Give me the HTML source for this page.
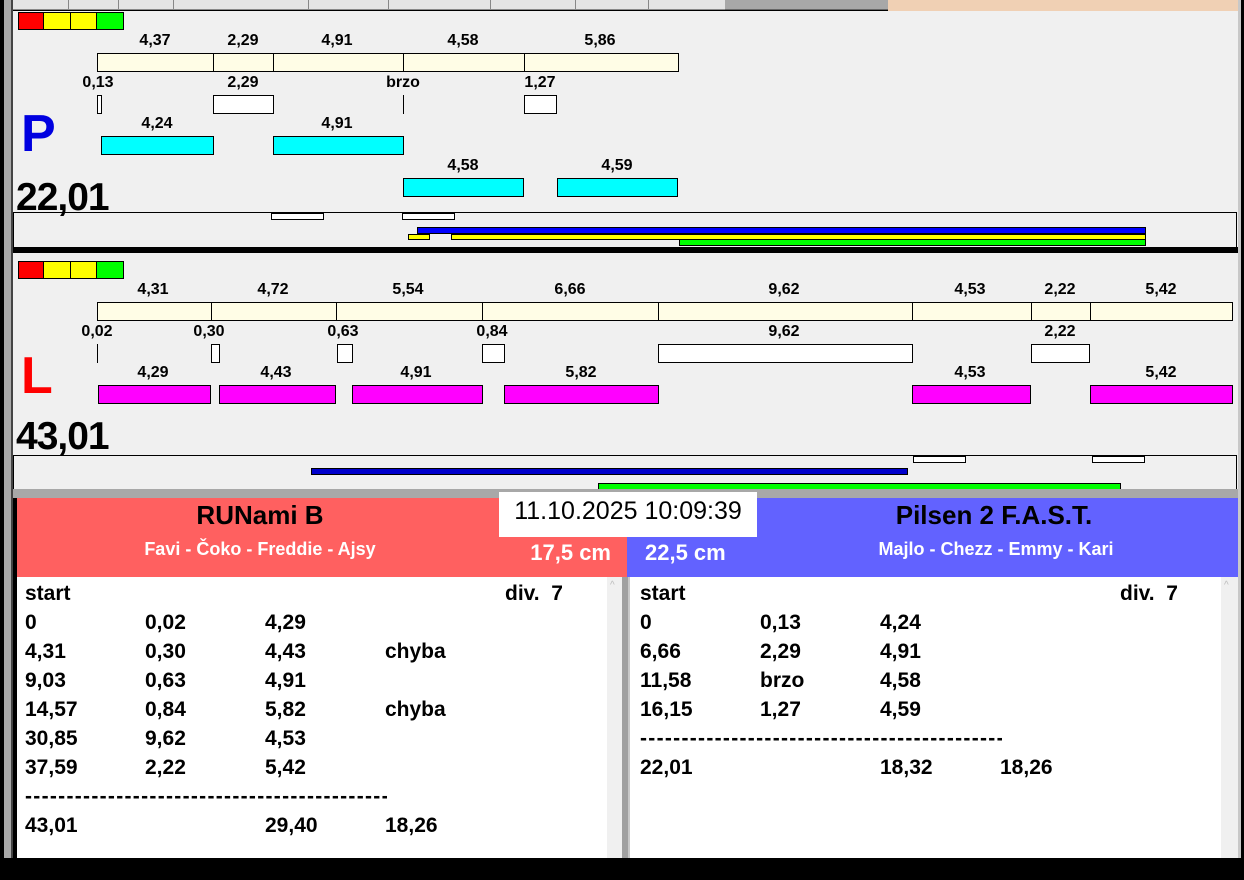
<!DOCTYPE html>
<html><head><meta charset="utf-8"><style>
*{margin:0;padding:0;box-sizing:border-box}
body{width:1244px;height:880px;background:#000;position:relative;overflow:hidden;font-family:"Liberation Sans",Arial,sans-serif;font-weight:bold}
div{position:absolute}
.p{background:#f0f0f0}
.y{background:#fffde6;border:1px solid #000}
.w{background:#fff;border:1px solid #000}
.c{background:#00ffff;border:1px solid #000}
.m{background:#ff00ff;border:1px solid #000}
.l{font-size:16px;color:#000;transform:translateX(-50%);white-space:nowrap;line-height:18px;top:0}
.t{font-size:21px;line-height:29px;white-space:nowrap;color:#000}
.d{font-size:21px;line-height:29px;white-space:nowrap;letter-spacing:1.3px;overflow:hidden;width:362px}
</style></head><body>
<!-- frame -->
<div style="left:4px;top:0;width:9px;height:858px;background:#a8a8a8;border-right:2px solid #444"></div>
<div style="left:1238px;top:0;width:3px;height:858px;background:#c8c8c8"></div>
<!-- top tab strip -->
<div style="left:13px;top:0;width:712px;height:10px;background:#e4e4e4;border-bottom:1px solid #888"></div>
<div style="left:68px;top:0;width:1px;height:9px;background:#888"></div>
<div style="left:118px;top:0;width:1px;height:9px;background:#888"></div>
<div style="left:173px;top:0;width:1px;height:9px;background:#888"></div>
<div style="left:308px;top:0;width:1px;height:9px;background:#888"></div>
<div style="left:388px;top:0;width:1px;height:9px;background:#888"></div>
<div style="left:490px;top:0;width:1px;height:9px;background:#888"></div>
<div style="left:575px;top:0;width:1px;height:9px;background:#888"></div>
<div style="left:648px;top:0;width:1px;height:9px;background:#888"></div>
<div style="left:725px;top:0;width:163px;height:10px;background:#a8a8a8;border-bottom:1px solid #666"></div>
<div style="left:888px;top:0;width:350px;height:12px;background:#f0d0b4"></div>

<!-- PANEL 1 -->
<div class="p" style="left:13px;top:11px;width:1225px;height:237px"></div>
<div style="left:18px;top:12px;width:26px;height:18px;background:#f00;border:1px solid #000"></div>
<div style="left:44px;top:12px;width:27px;height:18px;background:#ff0;border:1px solid #000;border-left:0"></div>
<div style="left:71px;top:12px;width:26px;height:18px;background:#ff0;border:1px solid #000;border-left:0"></div>
<div style="left:97px;top:12px;width:27px;height:18px;background:#0f0;border:1px solid #000;border-left:0"></div>

<div class="l" style="left:155px;top:32px">4,37</div>
<div class="l" style="left:243px;top:32px">2,29</div>
<div class="l" style="left:337px;top:32px">4,91</div>
<div class="l" style="left:463px;top:32px">4,58</div>
<div class="l" style="left:600px;top:32px">5,86</div>
<div class="y" style="left:97px;top:53px;width:117px;height:19px"></div>
<div class="y" style="left:213px;top:53px;width:61px;height:19px"></div>
<div class="y" style="left:273px;top:53px;width:131px;height:19px"></div>
<div class="y" style="left:403px;top:53px;width:122px;height:19px"></div>
<div class="y" style="left:524px;top:53px;width:155px;height:19px"></div>

<div class="l" style="left:98px;top:74px">0,13</div>
<div class="l" style="left:243px;top:74px">2,29</div>
<div class="l" style="left:403px;top:74px">brzo</div>
<div class="l" style="left:540px;top:74px">1,27</div>
<div class="w" style="left:97px;top:95px;width:5px;height:19px"></div>
<div class="w" style="left:213px;top:95px;width:61px;height:19px"></div>
<div style="left:403px;top:95px;width:1px;height:19px;background:#000"></div>
<div class="w" style="left:524px;top:95px;width:33px;height:19px"></div>

<div style="left:21px;top:104px;font-size:52px;color:#0000e0;line-height:60px">P</div>
<div class="l" style="left:157px;top:115px">4,24</div>
<div class="l" style="left:337px;top:115px">4,91</div>
<div class="c" style="left:101px;top:136px;width:113px;height:19px"></div>
<div class="c" style="left:273px;top:136px;width:131px;height:19px"></div>
<div class="l" style="left:463px;top:157px">4,58</div>
<div class="l" style="left:617px;top:157px">4,59</div>
<div class="c" style="left:403px;top:178px;width:121px;height:19px"></div>
<div class="c" style="left:557px;top:178px;width:121px;height:19px"></div>
<div style="left:16px;top:176px;font-size:39px;line-height:44px;letter-spacing:-1px">22,01</div>

<div style="left:13px;top:212px;width:1224px;height:36px;border:1px solid #000;border-bottom:0"></div>
<div class="w" style="left:271px;top:213px;width:53px;height:7px"></div>
<div class="w" style="left:402px;top:213px;width:53px;height:7px"></div>
<div style="left:417px;top:227px;width:729px;height:7px;background:#00f;border:1px solid #000"></div>
<div style="left:408px;top:234px;width:22px;height:6px;background:#ff0;border:1px solid #000"></div>
<div style="left:451px;top:234px;width:695px;height:6px;background:#ff0;border:1px solid #000"></div>
<div style="left:679px;top:240px;width:467px;height:6px;background:#0f0;border:1px solid #000;border-top:0"></div>
<div style="left:13px;top:247px;width:1225px;height:6px;background:#000"></div>

<!-- PANEL 2 -->
<div class="p" style="left:13px;top:253px;width:1225px;height:236px"></div>
<div style="left:18px;top:261px;width:26px;height:18px;background:#f00;border:1px solid #000"></div>
<div style="left:44px;top:261px;width:27px;height:18px;background:#ff0;border:1px solid #000;border-left:0"></div>
<div style="left:71px;top:261px;width:26px;height:18px;background:#ff0;border:1px solid #000;border-left:0"></div>
<div style="left:97px;top:261px;width:27px;height:18px;background:#0f0;border:1px solid #000;border-left:0"></div>

<div class="l" style="left:153px;top:281px">4,31</div>
<div class="l" style="left:273px;top:281px">4,72</div>
<div class="l" style="left:408px;top:281px">5,54</div>
<div class="l" style="left:570px;top:281px">6,66</div>
<div class="l" style="left:784px;top:281px">9,62</div>
<div class="l" style="left:970px;top:281px">4,53</div>
<div class="l" style="left:1060px;top:281px">2,22</div>
<div class="l" style="left:1161px;top:281px">5,42</div>
<div class="y" style="left:97px;top:302px;width:115px;height:19px"></div>
<div class="y" style="left:211px;top:302px;width:126px;height:19px"></div>
<div class="y" style="left:336px;top:302px;width:147px;height:19px"></div>
<div class="y" style="left:482px;top:302px;width:177px;height:19px"></div>
<div class="y" style="left:658px;top:302px;width:255px;height:19px"></div>
<div class="y" style="left:912px;top:302px;width:120px;height:19px"></div>
<div class="y" style="left:1031px;top:302px;width:60px;height:19px"></div>
<div class="y" style="left:1090px;top:302px;width:143px;height:19px"></div>

<div class="l" style="left:97px;top:323px">0,02</div>
<div class="l" style="left:209px;top:323px">0,30</div>
<div class="l" style="left:343px;top:323px">0,63</div>
<div class="l" style="left:492px;top:323px">0,84</div>
<div class="l" style="left:784px;top:323px">9,62</div>
<div class="l" style="left:1060px;top:323px">2,22</div>
<div style="left:97px;top:344px;width:1px;height:19px;background:#000"></div>
<div class="w" style="left:211px;top:344px;width:9px;height:19px"></div>
<div class="w" style="left:337px;top:344px;width:16px;height:19px"></div>
<div class="w" style="left:482px;top:344px;width:23px;height:19px"></div>
<div class="w" style="left:658px;top:344px;width:255px;height:19px"></div>
<div class="w" style="left:1031px;top:344px;width:59px;height:19px"></div>

<div style="left:21px;top:346px;font-size:52px;color:#f00;line-height:60px">L</div>
<div class="l" style="left:153px;top:364px">4,29</div>
<div class="l" style="left:276px;top:364px">4,43</div>
<div class="l" style="left:416px;top:364px">4,91</div>
<div class="l" style="left:581px;top:364px">5,82</div>
<div class="l" style="left:970px;top:364px">4,53</div>
<div class="l" style="left:1161px;top:364px">5,42</div>
<div class="m" style="left:98px;top:385px;width:113px;height:19px"></div>
<div class="m" style="left:219px;top:385px;width:117px;height:19px"></div>
<div class="m" style="left:352px;top:385px;width:131px;height:19px"></div>
<div class="m" style="left:504px;top:385px;width:155px;height:19px"></div>
<div class="m" style="left:912px;top:385px;width:119px;height:19px"></div>
<div class="m" style="left:1090px;top:385px;width:143px;height:19px"></div>
<div style="left:16px;top:415px;font-size:39px;line-height:44px;letter-spacing:-1px">43,01</div>

<div style="left:13px;top:455px;width:1224px;height:35px;border:1px solid #000;border-bottom:0"></div>
<div class="w" style="left:913px;top:456px;width:53px;height:7px"></div>
<div class="w" style="left:1092px;top:456px;width:53px;height:7px"></div>
<div style="left:311px;top:468px;width:597px;height:7px;background:#00c;border:1px solid #000"></div>
<div style="left:598px;top:483px;width:523px;height:7px;background:#0f0;border:1px solid #000"></div>
<div style="left:13px;top:489px;width:1225px;height:9px;background:#a8a8a8"></div>

<!-- HEADERS -->
<div style="left:17px;top:498px;width:610px;height:79px;background:#ff6060"></div>
<div style="left:627px;top:498px;width:611px;height:79px;background:#6262ff"></div>
<div style="left:17px;top:498px;width:486px;text-align:center;font-size:26px;line-height:34px">RUNami B</div>
<div style="left:17px;top:536px;width:486px;text-align:center;font-size:18px;line-height:26px;color:#fff">Favi - Čoko - Freddie - Ajsy</div>
<div style="left:490px;top:538px;width:121px;text-align:right;font-size:22px;line-height:30px;color:#fff">17,5 cm</div>
<div style="left:645px;top:538px;font-size:22px;line-height:30px;color:#fff">22,5 cm</div>
<div style="left:757px;top:498px;width:474px;text-align:center;font-size:26px;line-height:34px">Pilsen 2 F.A.S.T.</div>
<div style="left:757px;top:536px;width:478px;text-align:center;font-size:18px;line-height:26px;color:#fff">Majlo - Chezz - Emmy - Kari</div>
<div style="left:499px;top:492px;width:258px;height:45px;background:#fff;font-weight:normal;font-size:25px;line-height:38px;text-align:center">11.10.2025 10:09:39</div>

<!-- TEXT AREAS -->
<div style="left:17px;top:577px;width:590px;height:281px;background:#fff"></div>
<div style="left:607px;top:577px;width:15px;height:281px;background:#f0f0f0"></div>
<div style="left:622px;top:577px;width:8px;height:281px;background:#a0a0a0;border-right:2px solid #c8c8c8"></div>
<div style="left:630px;top:577px;width:591px;height:281px;background:#fff"></div>
<div style="left:1221px;top:577px;width:17px;height:281px;background:#f0f0f0"></div>
<div style="left:610px;top:580px;font-size:10px;color:#bbb;font-weight:normal">^</div>
<div style="left:1224px;top:580px;font-size:10px;color:#bbb;font-weight:normal">^</div>

<div class="t" style="left:25px;top:579px">start</div><div class="t" style="left:505px;top:579px">div.&nbsp; 7</div>
<div class="t" style="left:25px;top:608px">0</div><div class="t" style="left:145px;top:608px">0,02</div><div class="t" style="left:265px;top:608px">4,29</div>
<div class="t" style="left:25px;top:637px">4,31</div><div class="t" style="left:145px;top:637px">0,30</div><div class="t" style="left:265px;top:637px">4,43</div><div class="t" style="left:385px;top:637px">chyba</div>
<div class="t" style="left:25px;top:666px">9,03</div><div class="t" style="left:145px;top:666px">0,63</div><div class="t" style="left:265px;top:666px">4,91</div>
<div class="t" style="left:25px;top:695px">14,57</div><div class="t" style="left:145px;top:695px">0,84</div><div class="t" style="left:265px;top:695px">5,82</div><div class="t" style="left:385px;top:695px">chyba</div>
<div class="t" style="left:25px;top:724px">30,85</div><div class="t" style="left:145px;top:724px">9,62</div><div class="t" style="left:265px;top:724px">4,53</div>
<div class="t" style="left:25px;top:753px">37,59</div><div class="t" style="left:145px;top:753px">2,22</div><div class="t" style="left:265px;top:753px">5,42</div>
<div class="d" style="left:25px;top:782px">------------------------------------------------------------</div>
<div class="t" style="left:25px;top:811px">43,01</div><div class="t" style="left:265px;top:811px">29,40</div><div class="t" style="left:385px;top:811px">18,26</div>

<div class="t" style="left:640px;top:579px">start</div><div class="t" style="left:1120px;top:579px">div.&nbsp; 7</div>
<div class="t" style="left:640px;top:608px">0</div><div class="t" style="left:760px;top:608px">0,13</div><div class="t" style="left:880px;top:608px">4,24</div>
<div class="t" style="left:640px;top:637px">6,66</div><div class="t" style="left:760px;top:637px">2,29</div><div class="t" style="left:880px;top:637px">4,91</div>
<div class="t" style="left:640px;top:666px">11,58</div><div class="t" style="left:760px;top:666px">brzo</div><div class="t" style="left:880px;top:666px">4,58</div>
<div class="t" style="left:640px;top:695px">16,15</div><div class="t" style="left:760px;top:695px">1,27</div><div class="t" style="left:880px;top:695px">4,59</div>
<div class="d" style="left:640px;top:724px">------------------------------------------------------------</div>
<div class="t" style="left:640px;top:753px">22,01</div><div class="t" style="left:880px;top:753px">18,32</div><div class="t" style="left:1000px;top:753px">18,26</div>
</body></html>
